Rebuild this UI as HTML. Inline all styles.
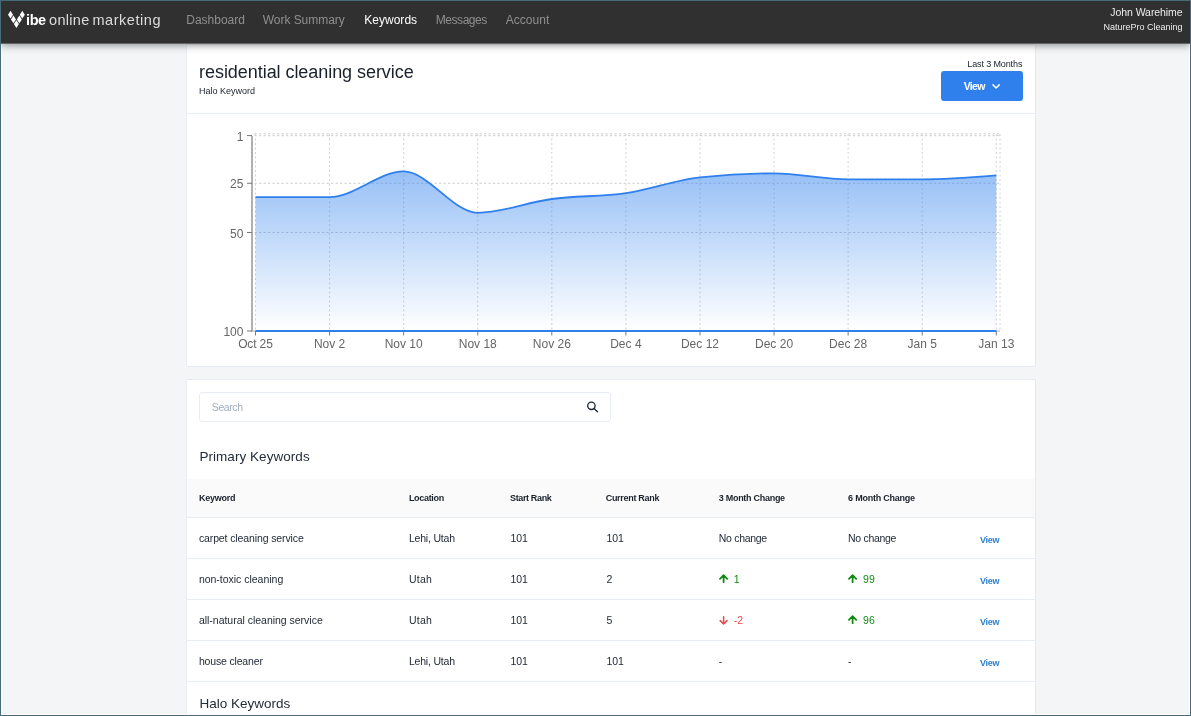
<!DOCTYPE html><html lang="en"><head><meta charset="utf-8"><title>Keywords - Vibe Online Marketing</title>
<style>

html,body{margin:0;padding:0}
body{width:1191px;height:716px;overflow:hidden;position:relative;background:#f4f5f7;font-family:"Liberation Sans", sans-serif;}
.t{position:absolute;white-space:nowrap;font-family:"Liberation Sans", sans-serif;}
.abs{position:absolute}
.frame{position:absolute;left:0;top:0;width:1189px;height:714px;border:1px solid #466c77;z-index:50;pointer-events:none}
.inner{position:absolute;left:1px;top:1px;width:1187px;height:712px;border:1px solid #fff;z-index:5;pointer-events:none}
header{position:absolute;left:1px;top:1px;width:1189px;height:42px;background:#303030;border-bottom:1px solid #646464;background-clip:padding-box;z-index:20;box-shadow:0 1px 8px rgba(0,0,0,.45)}
.card{position:absolute;left:186px;width:848px;background:#fff;border:1px solid #e6e9f1;border-left-color:#eaedf4;border-right-color:#e6e9f2;border-radius:2px;z-index:1}
.chart{position:absolute;left:0;top:0;z-index:2}
.hr{position:absolute;left:187px;width:848px;height:1px;background:#e8ecf3;z-index:2}
.z3{z-index:3}
.full{left:0;top:0;width:1191px;height:716px;will-change:transform;transform:translateZ(0)}

</style></head><body>
<div class="inner"></div><div class="frame"></div>
<header></header>
<div class="abs full" style="z-index:30">
<svg class="abs" style="left:0;top:0" width="40" height="40" viewBox="0 0 40 40"><polygon points="10.5,10.799999999999999 13.0,14.7 10.5,18.599999999999998 8.0,14.7" fill="#fff"/><polygon points="13.45,15.499999999999998 15.95,19.4 13.45,23.299999999999997 10.95,19.4" fill="#fff"/><polygon points="16.4,20.200000000000003 18.9,24.1 16.4,28.0 13.899999999999999,24.1" fill="#fff"/><polygon points="19.35,15.499999999999998 21.85,19.4 19.35,23.299999999999997 16.85,19.4" fill="#fff"/><polygon points="22.3,10.799999999999999 24.8,14.7 22.3,18.599999999999998 19.8,14.7" fill="#fff"/></svg>
<span class="t" style="top:11.88px;font-size:14.5px;line-height:17px;color:#fff;font-weight:700;letter-spacing:-0.393px;left:26.00px;">ibe</span>
<span class="t" style="top:11.88px;font-size:14.5px;line-height:17px;color:#dcdcdc;font-weight:400;letter-spacing:0.293px;left:49.10px;">online</span>
<span class="t" style="top:11.88px;font-size:14.5px;line-height:17px;color:#dcdcdc;font-weight:400;letter-spacing:0.538px;left:92.50px;">marketing</span>
<span class="t" style="top:12.84px;font-size:12px;line-height:14px;color:#8f8f8f;font-weight:400;letter-spacing:-0.016px;left:186.30px;">Dashboard</span>
<span class="t" style="top:12.84px;font-size:12px;line-height:14px;color:#8f8f8f;font-weight:400;letter-spacing:-0.050px;left:262.80px;">Work Summary</span>
<span class="t" style="top:12.84px;font-size:12px;line-height:14px;color:#fff;font-weight:400;letter-spacing:0.030px;left:364.20px;">Keywords</span>
<span class="t" style="top:12.84px;font-size:12px;line-height:14px;color:#8f8f8f;font-weight:400;letter-spacing:-0.456px;left:435.80px;">Messages</span>
<span class="t" style="top:12.84px;font-size:12px;line-height:14px;color:#8f8f8f;font-weight:400;letter-spacing:0.012px;left:505.80px;">Account</span>
<span class="t" style="top:6.36px;font-size:10.5px;line-height:13px;color:#ededed;font-weight:400;letter-spacing:-0.075px;right:8.48px;text-align:right;">John Warehime</span>
<span class="t" style="top:21.68px;font-size:9px;line-height:11px;color:#ededed;font-weight:400;letter-spacing:-0.002px;right:8.40px;text-align:right;">NaturePro Cleaning</span>
</div>
<section class="card" style="top:44px;height:321px"></section>
<div class="hr" style="top:113px"></div>
<div class="abs full z3">
<span class="t" style="top:60.56px;font-size:18px;line-height:22px;color:#1a202c;font-weight:400;letter-spacing:-0.056px;left:199.10px;">residential cleaning service</span>
<span class="t" style="top:85.88px;font-size:9px;line-height:11px;color:#1a202c;font-weight:400;letter-spacing:-0.020px;left:199.10px;">Halo Keyword</span>
<span class="t" style="top:58.58px;font-size:9px;line-height:11px;color:#1a202c;font-weight:400;letter-spacing:-0.119px;right:168.72px;text-align:right;">Last 3 Months</span>
<div class="abs" style="left:941px;top:71px;width:82px;height:30px;border-radius:3px;background:#2f80ed"></div>
<span class="t" style="top:79.76px;font-size:10.5px;line-height:13px;color:#fff;font-weight:700;letter-spacing:-0.690px;left:963.70px;">View</span>
<svg class="abs" style="left:990px;top:81px" width="12" height="10" viewBox="0 0 12 10"><path d="M3.0 3.9 L6.1 7.0 L9.2 3.9" fill="none" stroke="#fff" stroke-width="1.5" stroke-linecap="round" stroke-linejoin="round"/></svg>
</div>
<svg class="chart" width="1191" height="716" viewBox="0 0 1191 716"><defs><linearGradient id="g" x1="0" y1="0" x2="0" y2="1"><stop offset="0" stop-color="#2f80ed" stop-opacity="0.5"/><stop offset="1" stop-color="#2f80ed" stop-opacity="0"/></linearGradient></defs><g stroke="#cccccc" stroke-width="1" stroke-dasharray="2.25 2.25" fill="none"><line x1="254.5" y1="133.80" x2="1000.0" y2="133.80"/><line x1="254.5" y1="135.70" x2="1000.0" y2="135.70"/><line x1="254.5" y1="183.25" x2="1000.0" y2="183.25"/><line x1="254.5" y1="232.50" x2="1000.0" y2="232.50"/></g><g stroke="#d2d2d2" stroke-width="1" stroke-dasharray="2 2.5" fill="none"><line x1="255.50" y1="134.0" x2="255.50" y2="331.0"/><line x1="329.58" y1="134.0" x2="329.58" y2="331.0"/><line x1="403.66" y1="134.0" x2="403.66" y2="331.0"/><line x1="477.74" y1="134.0" x2="477.74" y2="331.0"/><line x1="551.82" y1="134.0" x2="551.82" y2="331.0"/><line x1="625.90" y1="134.0" x2="625.90" y2="331.0"/><line x1="699.98" y1="134.0" x2="699.98" y2="331.0"/><line x1="774.06" y1="134.0" x2="774.06" y2="331.0"/><line x1="848.14" y1="134.0" x2="848.14" y2="331.0"/><line x1="922.22" y1="134.0" x2="922.22" y2="331.0"/><line x1="996.30" y1="134.0" x2="996.30" y2="331.0"/><line x1="1000.0" y1="134.0" x2="1000.0" y2="331.0"/></g><line x1="252" y1="135.97" x2="252" y2="331.5" stroke="#b0b0b0" stroke-width="2"/><line x1="251" y1="331.0" x2="1000.0" y2="331.0" stroke="#b0b0b0" stroke-width="1"/><g stroke="#777" stroke-width="1"><line x1="247" y1="135.60" x2="252" y2="135.60"/><line x1="247" y1="183.25" x2="252" y2="183.25"/><line x1="247" y1="232.50" x2="252" y2="232.50"/><line x1="247" y1="331.00" x2="252" y2="331.00"/><line x1="255.50" y1="331.0" x2="255.50" y2="335.5"/><line x1="329.58" y1="331.0" x2="329.58" y2="335.5"/><line x1="403.66" y1="331.0" x2="403.66" y2="335.5"/><line x1="477.74" y1="331.0" x2="477.74" y2="335.5"/><line x1="551.82" y1="331.0" x2="551.82" y2="335.5"/><line x1="625.90" y1="331.0" x2="625.90" y2="335.5"/><line x1="699.98" y1="331.0" x2="699.98" y2="335.5"/><line x1="774.06" y1="331.0" x2="774.06" y2="335.5"/><line x1="848.14" y1="331.0" x2="848.14" y2="335.5"/><line x1="922.22" y1="331.0" x2="922.22" y2="335.5"/><line x1="996.30" y1="331.0" x2="996.30" y2="335.5"/></g><path d="M255.50,197.04C280.19,197.04,304.89,197.04,329.58,197.04C354.27,197.04,378.97,171.43,403.66,171.43C428.35,171.43,453.05,212.80,477.74,212.80C502.43,212.80,527.13,202.29,551.82,199.01C576.51,195.73,601.21,196.71,625.90,193.10C650.59,189.49,675.29,179.97,699.98,177.34C724.67,174.71,749.37,173.40,774.06,173.40C798.75,173.40,823.45,179.31,848.14,179.31C872.83,179.31,897.53,179.31,922.22,179.31C946.91,179.31,971.61,177.34,996.30,175.37L996.30,331.0L255.50,331.0Z" fill="url(#g)"/><path d="M255.50,197.04C280.19,197.04,304.89,197.04,329.58,197.04C354.27,197.04,378.97,171.43,403.66,171.43C428.35,171.43,453.05,212.80,477.74,212.80C502.43,212.80,527.13,202.29,551.82,199.01C576.51,195.73,601.21,196.71,625.90,193.10C650.59,189.49,675.29,179.97,699.98,177.34C724.67,174.71,749.37,173.40,774.06,173.40C798.75,173.40,823.45,179.31,848.14,179.31C872.83,179.31,897.53,179.31,922.22,179.31C946.91,179.31,971.61,177.34,996.30,175.37" fill="none" stroke="#2f80ed" stroke-width="1.8"/><line x1="255.5" y1="331.0" x2="996.30" y2="331.0" stroke="#2f80ed" stroke-width="2"/></svg>
<div class="abs full z3">
<span class="t" style="top:130.01px;font-size:12px;line-height:14px;color:#666;font-weight:400;letter-spacing:0.000px;right:947.60px;text-align:right;">1</span>
<span class="t" style="top:177.29px;font-size:12px;line-height:14px;color:#666;font-weight:400;letter-spacing:0.000px;right:947.60px;text-align:right;">25</span>
<span class="t" style="top:226.54px;font-size:12px;line-height:14px;color:#666;font-weight:400;letter-spacing:0.000px;right:947.60px;text-align:right;">50</span>
<span class="t" style="top:325.04px;font-size:12px;line-height:14px;color:#666;font-weight:400;letter-spacing:0.000px;right:947.60px;text-align:right;">100</span>
<span class="t" style="top:337.34px;font-size:12px;line-height:14px;color:#666;font-weight:400;letter-spacing:-0.135px;left:155.43px;width:200px;text-align:center;">Oct 25</span>
<span class="t" style="top:337.34px;font-size:12px;line-height:14px;color:#666;font-weight:400;letter-spacing:0.000px;left:229.58px;width:200px;text-align:center;">Nov 2</span>
<span class="t" style="top:337.34px;font-size:12px;line-height:14px;color:#666;font-weight:400;letter-spacing:0.000px;left:303.66px;width:200px;text-align:center;">Nov 10</span>
<span class="t" style="top:337.34px;font-size:12px;line-height:14px;color:#666;font-weight:400;letter-spacing:0.000px;left:377.74px;width:200px;text-align:center;">Nov 18</span>
<span class="t" style="top:337.34px;font-size:12px;line-height:14px;color:#666;font-weight:400;letter-spacing:0.000px;left:451.82px;width:200px;text-align:center;">Nov 26</span>
<span class="t" style="top:337.34px;font-size:12px;line-height:14px;color:#666;font-weight:400;letter-spacing:0.000px;left:525.90px;width:200px;text-align:center;">Dec 4</span>
<span class="t" style="top:337.34px;font-size:12px;line-height:14px;color:#666;font-weight:400;letter-spacing:0.000px;left:599.98px;width:200px;text-align:center;">Dec 12</span>
<span class="t" style="top:337.34px;font-size:12px;line-height:14px;color:#666;font-weight:400;letter-spacing:0.000px;left:674.06px;width:200px;text-align:center;">Dec 20</span>
<span class="t" style="top:337.34px;font-size:12px;line-height:14px;color:#666;font-weight:400;letter-spacing:0.000px;left:748.14px;width:200px;text-align:center;">Dec 28</span>
<span class="t" style="top:337.34px;font-size:12px;line-height:14px;color:#666;font-weight:400;letter-spacing:0.000px;left:822.22px;width:200px;text-align:center;">Jan 5</span>
<span class="t" style="top:337.34px;font-size:12px;line-height:14px;color:#666;font-weight:400;letter-spacing:0.000px;left:896.30px;width:200px;text-align:center;">Jan 13</span>
</div>
<section class="card" style="top:379px;height:400px"></section>
<div class="abs full z3">
<div class="abs" style="left:199px;top:392px;width:410px;height:28px;border:1px solid #e8ecf3;border-radius:3px;background:#fff"></div>
<span class="t" style="top:401.36px;font-size:10.5px;line-height:13px;color:#a0aec0;font-weight:400;letter-spacing:-0.406px;left:211.80px;">Search</span>
<svg class="abs" style="left:584px;top:398px" width="16" height="16" viewBox="0 0 16 16"><circle cx="7.4" cy="7.8" r="3.7" fill="none" stroke="#1f2733" stroke-width="1.3"/><path d="M10.1 10.5 L13.5 13.8" stroke="#1f2733" stroke-width="1.3" stroke-linecap="round"/></svg>
<span class="t" style="top:449.32px;font-size:13.5px;line-height:16px;color:#252d3a;font-weight:400;letter-spacing:0.048px;left:199.40px;">Primary Keywords</span>
<div class="abs" style="left:187px;top:479px;width:848px;height:38px;background:#fafafa"></div>
<span class="t" style="top:492.58px;font-size:9px;line-height:11px;color:#1a202c;font-weight:700;letter-spacing:-0.252px;left:199.00px;">Keyword</span>
<span class="t" style="top:492.58px;font-size:9px;line-height:11px;color:#1a202c;font-weight:700;letter-spacing:-0.314px;left:408.90px;">Location</span>
<span class="t" style="top:492.58px;font-size:9px;line-height:11px;color:#1a202c;font-weight:700;letter-spacing:-0.356px;left:510.00px;">Start Rank</span>
<span class="t" style="top:492.58px;font-size:9px;line-height:11px;color:#1a202c;font-weight:700;letter-spacing:-0.291px;left:605.70px;">Current Rank</span>
<span class="t" style="top:492.58px;font-size:9px;line-height:11px;color:#1a202c;font-weight:700;letter-spacing:-0.284px;left:718.80px;">3 Month Change</span>
<span class="t" style="top:492.58px;font-size:9px;line-height:11px;color:#1a202c;font-weight:700;letter-spacing:-0.230px;left:848.10px;">6 Month Change</span>
<div class="hr" style="top:517px"></div>
<div class="hr" style="top:558px"></div>
<div class="hr" style="top:599px"></div>
<div class="hr" style="top:640px"></div>
<div class="hr" style="top:681px"></div>
<span class="t" style="top:532.06px;font-size:10.5px;line-height:13px;color:#232b38;font-weight:400;letter-spacing:-0.116px;left:198.90px;">carpet cleaning service</span>
<span class="t" style="top:532.06px;font-size:10.5px;line-height:13px;color:#232b38;font-weight:400;letter-spacing:-0.192px;left:408.90px;">Lehi, Utah</span>
<span class="t" style="top:532.06px;font-size:10.5px;line-height:13px;color:#232b38;font-weight:400;letter-spacing:-0.040px;left:510.50px;">101</span>
<span class="t" style="top:532.06px;font-size:10.5px;line-height:13px;color:#232b38;font-weight:400;letter-spacing:-0.040px;left:606.40px;">101</span>
<span class="t" style="top:532.06px;font-size:10.5px;line-height:13px;color:#232b38;font-weight:400;letter-spacing:-0.306px;left:718.80px;">No change</span>
<span class="t" style="top:532.06px;font-size:10.5px;line-height:13px;color:#232b38;font-weight:400;letter-spacing:-0.306px;left:848.10px;">No change</span>
<span class="t" style="top:534.58px;font-size:9px;line-height:11px;color:#3182ce;font-weight:700;letter-spacing:-0.249px;left:980.00px;">View</span>
<span class="t" style="top:573.06px;font-size:10.5px;line-height:13px;color:#232b38;font-weight:400;letter-spacing:-0.017px;left:198.90px;">non-toxic cleaning</span>
<span class="t" style="top:573.06px;font-size:10.5px;line-height:13px;color:#232b38;font-weight:400;letter-spacing:0.287px;left:408.90px;">Utah</span>
<span class="t" style="top:573.06px;font-size:10.5px;line-height:13px;color:#232b38;font-weight:400;letter-spacing:-0.040px;left:510.50px;">101</span>
<span class="t" style="top:573.06px;font-size:10.5px;line-height:13px;color:#232b38;font-weight:400;letter-spacing:0.000px;left:606.40px;">2</span>
<svg class="abs" style="left:718.5px;top:573.9px" width="10" height="10" viewBox="0 0 10 10"><path d="M4.6 8.2 L4.6 1.4 M1 4.8 L4.6 1.2 L8.2 4.8" fill="none" stroke="#128a12" stroke-width="1.8" stroke-linecap="round" stroke-linejoin="round"/></svg>
<span class="t" style="top:573.06px;font-size:10.5px;line-height:13px;color:#128a12;font-weight:400;letter-spacing:0.000px;left:733.80px;">1</span>
<svg class="abs" style="left:847.8px;top:573.9px" width="10" height="10" viewBox="0 0 10 10"><path d="M4.6 8.2 L4.6 1.4 M1 4.8 L4.6 1.2 L8.2 4.8" fill="none" stroke="#128a12" stroke-width="1.8" stroke-linecap="round" stroke-linejoin="round"/></svg>
<span class="t" style="top:573.06px;font-size:10.5px;line-height:13px;color:#128a12;font-weight:400;letter-spacing:0.000px;left:863.10px;">99</span>
<span class="t" style="top:575.58px;font-size:9px;line-height:11px;color:#3182ce;font-weight:700;letter-spacing:-0.249px;left:980.00px;">View</span>
<span class="t" style="top:614.06px;font-size:10.5px;line-height:13px;color:#232b38;font-weight:400;letter-spacing:-0.018px;left:198.90px;">all-natural cleaning service</span>
<span class="t" style="top:614.06px;font-size:10.5px;line-height:13px;color:#232b38;font-weight:400;letter-spacing:0.287px;left:408.90px;">Utah</span>
<span class="t" style="top:614.06px;font-size:10.5px;line-height:13px;color:#232b38;font-weight:400;letter-spacing:-0.040px;left:510.50px;">101</span>
<span class="t" style="top:614.06px;font-size:10.5px;line-height:13px;color:#232b38;font-weight:400;letter-spacing:0.000px;left:606.40px;">5</span>
<svg class="abs" style="left:718.5px;top:615.6px" width="10" height="10" viewBox="0 0 10 10"><path d="M4.6 0.8 L4.6 7.8 M1.2 4.6 L4.6 8.0 L8.0 4.6" fill="none" stroke="#e5484d" stroke-width="1.5" stroke-linecap="round" stroke-linejoin="round"/></svg>
<span class="t" style="top:614.06px;font-size:10.5px;line-height:13px;color:#e5484d;font-weight:400;letter-spacing:0.000px;left:733.80px;">-2</span>
<svg class="abs" style="left:847.8px;top:614.9px" width="10" height="10" viewBox="0 0 10 10"><path d="M4.6 8.2 L4.6 1.4 M1 4.8 L4.6 1.2 L8.2 4.8" fill="none" stroke="#128a12" stroke-width="1.8" stroke-linecap="round" stroke-linejoin="round"/></svg>
<span class="t" style="top:614.06px;font-size:10.5px;line-height:13px;color:#128a12;font-weight:400;letter-spacing:0.000px;left:863.10px;">96</span>
<span class="t" style="top:616.58px;font-size:9px;line-height:11px;color:#3182ce;font-weight:700;letter-spacing:-0.249px;left:980.00px;">View</span>
<span class="t" style="top:655.06px;font-size:10.5px;line-height:13px;color:#232b38;font-weight:400;letter-spacing:-0.164px;left:198.90px;">house cleaner</span>
<span class="t" style="top:655.06px;font-size:10.5px;line-height:13px;color:#232b38;font-weight:400;letter-spacing:-0.192px;left:408.90px;">Lehi, Utah</span>
<span class="t" style="top:655.06px;font-size:10.5px;line-height:13px;color:#232b38;font-weight:400;letter-spacing:-0.040px;left:510.50px;">101</span>
<span class="t" style="top:655.06px;font-size:10.5px;line-height:13px;color:#232b38;font-weight:400;letter-spacing:-0.040px;left:606.40px;">101</span>
<span class="t" style="top:655.06px;font-size:10.5px;line-height:13px;color:#232b38;font-weight:400;letter-spacing:0.000px;left:718.80px;">-</span>
<span class="t" style="top:655.06px;font-size:10.5px;line-height:13px;color:#232b38;font-weight:400;letter-spacing:0.000px;left:848.10px;">-</span>
<span class="t" style="top:657.58px;font-size:9px;line-height:11px;color:#3182ce;font-weight:700;letter-spacing:-0.249px;left:980.00px;">View</span>
<span class="t" style="top:696.32px;font-size:13.5px;line-height:16px;color:#252d3a;font-weight:400;letter-spacing:0.005px;left:199.40px;">Halo Keywords</span>
</div>
</body></html>
